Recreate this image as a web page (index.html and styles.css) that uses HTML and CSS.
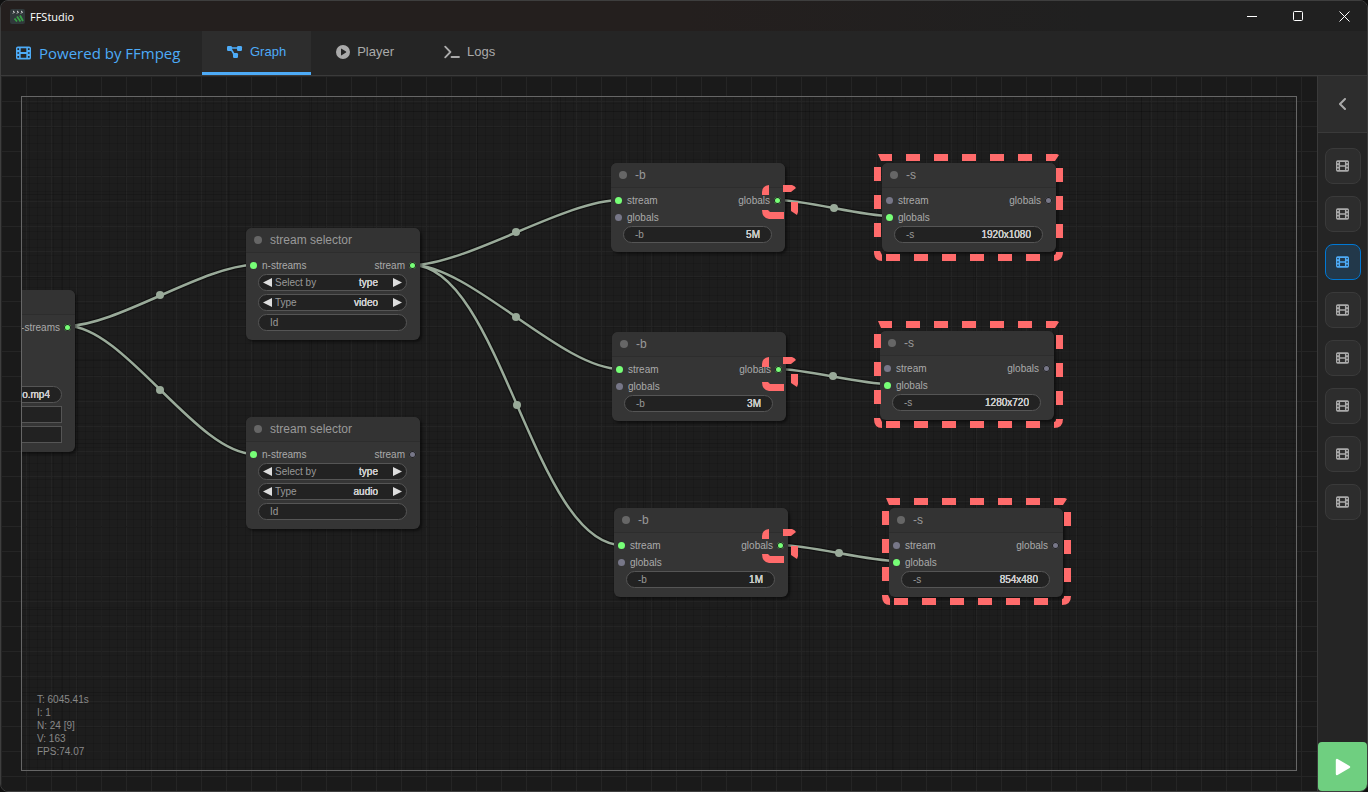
FILE: index.html
```html
<!DOCTYPE html>
<html lang="en">
<head>
<meta charset="utf-8">
<title>FFStudio</title>
<link rel="stylesheet" href="styles.css">
</head>
<body>
<svg class="defs" aria-hidden="true">
  <symbol id="film" viewBox="0 0 16 14">
    <path fill="currentColor" fill-rule="evenodd" d="M2 0h12a2 2 0 0 1 2 2v10a2 2 0 0 1-2 2H2a2 2 0 0 1-2-2V2a2 2 0 0 1 2-2zM5 2v4h6V2zM5 8v4h6V8zM1.5 2v1.7h1.8V2zM1.5 6.1v1.8h1.8V6.1zM1.5 10.2V12h1.8v-1.8zM12.7 2v1.7h1.8V2zM12.7 6.1v1.8h1.8V6.1zM12.7 10.2V12h1.8v-1.8z"/>
  </symbol>
  <symbol id="frame-large" viewBox="0 0 189 107">
    <path fill="#ff6b6b" d="M4 0H18V7H7ZM32 0h14v7h-14zM60 0h14v7h-14zM88 0h14v7h-14zM116 0h14v7h-14zM144 0h14v7h-14zM172 0H183L185 1 181 7H172ZM0 13h7v14H0zM0 41h7v14H0zM0 69h7v14H0zM182 14h7v14h-7zM182 42h7v14h-7zM182 70h7v14h-7zM0 97H6L8 101V107Q0 107 0 98ZM12 100h14v7h-14zM40 100h14v7h-14zM68 100h14v7h-14zM96 100h14v7h-14zM124 100h14v7h-14zM152 100h14v7h-14zM189 98Q189 107 180 107V101Q182 101 182 98Z"/>
  </symbol>
  <symbol id="frame-small" viewBox="0 0 36 34">
    <path fill="#ff6b6b" d="M0 10V7Q0 1 7 0V10ZM21 0H30Q33 1 34 3L29 7H21ZM29 17H36V27L35 30 29 26ZM0 25H6L8 27H22V34H7Q0 33 0 25Z"/>
  </symbol>
</svg>
<div class="window">
  <header class="titlebar">
    <svg class="app-icon" viewBox="0 0 15 15">
      <rect width="15" height="15" rx="2" fill="#30383a"/>
      <path d="M3 2l1.5 1L3 4.5M7 2l1.5 1L7 4.500M11 2l1.500 1L11 4.500" stroke="#e6e6e6" fill="none"/>
      <path d="M4.500 9.500l2.500 3M7 7.500l3.500 5M10 6.500l3 5.500" stroke="#37a046" stroke-width="1.8" fill="none"/>
    </svg>
    <span class="app-title">FFStudio</span>
    <div class="window-controls">
      <button aria-label="Minimize"><svg viewBox="0 0 11 11"><path d="M0 5.5h10"/></svg></button>
      <button aria-label="Maximize"><svg viewBox="0 0 11 11"><rect x=".5" y=".5" width="9" height="9" rx="1"/></svg></button>
      <button aria-label="Close"><svg viewBox="0 0 11 11"><path d="M.5 .5l10 10M10.5 .5l-10 10"/></svg></button>
    </div>
  </header>
  <nav class="navbar">
    <div class="brand"><svg class="brand-icon"><use href="#film"/></svg>Powered by FFmpeg</div>
    <button class="tab active">
      <svg width="16" height="14" viewBox="0 0 16 14"><path d="M3 3h9M4 4l4 7" stroke="currentColor" stroke-width="1.6"/><rect y="1" width="5" height="5" rx="1.2" fill="currentColor"/><rect x="10" y="1" width="5" height="5" rx="1.2" fill="currentColor"/><rect x="6" y="8" width="5" height="5" rx="1.2" fill="currentColor"/></svg>
      Graph</button>
    <button class="tab">
      <svg width="14" height="14" viewBox="0 0 14 14"><path fill="currentColor" fill-rule="evenodd" d="M7 0a7 7 0 1 1 0 14A7 7 0 0 1 7 0zM5 4v6q0 .6.6.3L10 7.5q.6-.5 0-1L5.6 3.7Q5 3.4 5 4z"/></svg>
      Player</button>
    <button class="tab">
      <svg width="16" height="14" viewBox="0 0 16 14"><path d="M1.2 1.7L6.4 7 1.2 12.3M7.5 12H15" fill="none" stroke="currentColor" stroke-width="1.8" stroke-linecap="round" stroke-linejoin="round"/></svg>
      Logs</button>
  </nav>
  <div class="workspace">
    <main class="graph-area">
      <div class="canvas">
        <svg class="links">
          <g transform="translate(-22 -97)">
            <g class="link-shadow">
              <path d="M67 326C116 326 205 265 254 265M67 326C124 326 197 454 254 454M412 265C466 265 566 200 620 200M412 265C470 265 562 369 620 369M412 265C500 265 534 545 622 545M777 200C806 200 861 216 890 216M778 369C806 369 860 384 888 384M780 545C810 545 867 561 897 561"/>
            </g>
            <g class="link-line">
              <path d="M67 326C116 326 205 265 254 265M67 326C124 326 197 454 254 454M412 265C466 265 566 200 620 200M412 265C470 265 562 369 620 369M412 265C500 265 534 545 622 545M777 200C806 200 861 216 890 216M778 369C806 369 860 384 888 384M780 545C810 545 867 561 897 561"/>
            </g>
            <g fill="#99aa99">
              <circle cx="160" cy="295" r="4"/><circle cx="160" cy="390" r="4"/><circle cx="516" cy="232" r="4"/><circle cx="516" cy="317" r="4"/><circle cx="517" cy="405" r="4"/><circle cx="834" cy="208" r="4"/><circle cx="833" cy="376" r="4"/><circle cx="839" cy="553" r="4"/>
            </g>
          </g>
        </svg>

        <section class="node source">
          <div class="node-title"></div>
          <div class="slots"><div class="slot"><span class="output on">-streams</span></div></div>
          <div class="widgets">
            <div class="widget"><input class="file" aria-label="File" value="o.mp4"></div>
            <button class="widget square" aria-label="Option"></button>
            <button class="widget square" aria-label="Option"></button>
          </div>
        </section>

        <section class="node selector-video">
          <div class="node-title">stream selector</div>
          <div class="slots"><div class="slot"><span class="input on">n-streams</span><span class="output on">stream</span></div></div>
          <div class="widgets">
            <div class="widget combo"><button class="prev" aria-label="Previous"></button><label for="v1">Select by</label><select id="v1"><option>type</option></select><button class="next" aria-label="Next"></button></div>
            <div class="widget combo"><button class="prev" aria-label="Previous"></button><label for="v2">Type</label><select id="v2"><option>video</option></select><button class="next" aria-label="Next"></button></div>
            <label class="widget">Id<input value=""></label>
          </div>
        </section>

        <section class="node selector-audio">
          <div class="node-title">stream selector</div>
          <div class="slots"><div class="slot"><span class="input on">n-streams</span><span class="output">stream</span></div></div>
          <div class="widgets">
            <div class="widget combo"><button class="prev" aria-label="Previous"></button><label for="a1">Select by</label><select id="a1"><option>type</option></select><button class="next" aria-label="Next"></button></div>
            <div class="widget combo"><button class="prev" aria-label="Previous"></button><label for="a2">Type</label><select id="a2"><option>audio</option></select><button class="next" aria-label="Next"></button></div>
            <label class="widget">Id<input value=""></label>
          </div>
        </section>

        <section class="node bitrate-5m">
          <div class="node-title">-b</div>
          <div class="slots"><div class="slot"><span class="input on">stream</span><span class="output on">globals</span></div><div class="slot"><span class="input">globals</span></div></div>
          <div class="widgets"><label class="widget">-b<input value="5M"></label></div>
        </section>
        <section class="node bitrate-3m">
          <div class="node-title">-b</div>
          <div class="slots"><div class="slot"><span class="input on">stream</span><span class="output on">globals</span></div><div class="slot"><span class="input">globals</span></div></div>
          <div class="widgets"><label class="widget">-b<input value="3M"></label></div>
        </section>
        <section class="node bitrate-1m">
          <div class="node-title">-b</div>
          <div class="slots"><div class="slot"><span class="input on">stream</span><span class="output on">globals</span></div><div class="slot"><span class="input">globals</span></div></div>
          <div class="widgets"><label class="widget">-b<input value="1M"></label></div>
        </section>

        <section class="node size-1080">
          <div class="node-title">-s</div>
          <div class="slots"><div class="slot"><span class="input">stream</span><span class="output">globals</span></div><div class="slot"><span class="input on">globals</span></div></div>
          <div class="widgets"><label class="widget">-s<input value="1920x1080"></label></div>
        </section>
        <section class="node size-720">
          <div class="node-title">-s</div>
          <div class="slots"><div class="slot"><span class="input">stream</span><span class="output">globals</span></div><div class="slot"><span class="input on">globals</span></div></div>
          <div class="widgets"><label class="widget">-s<input value="1280x720"></label></div>
        </section>
        <section class="node size-480">
          <div class="node-title">-s</div>
          <div class="slots"><div class="slot"><span class="input">stream</span><span class="output">globals</span></div><div class="slot"><span class="input on">globals</span></div></div>
          <div class="widgets"><label class="widget">-s<input value="854x480"></label></div>
        </section>

        <svg class="frame large at-1080"><use href="#frame-large"/></svg>
        <svg class="frame large at-720"><use href="#frame-large"/></svg>
        <svg class="frame large at-480"><use href="#frame-large"/></svg>
        <svg class="frame small at-5m"><use href="#frame-small"/></svg>
        <svg class="frame small at-3m"><use href="#frame-small"/></svg>
        <svg class="frame small at-1m"><use href="#frame-small"/></svg>

        <div class="stats">
          <div>T: 6045.41s</div>
          <div>I: 1</div>
          <div>N: 24 [9]</div>
          <div>V: 163</div>
          <div>FPS:74.07</div>
        </div>
      </div>
    </main>
    <aside class="sidebar">
      <button class="collapse" aria-label="Expand panel"><svg width="8" height="12" viewBox="0 0 8 12"><path d="M6 1L1 6l5 5" fill="none" stroke="currentColor" stroke-width="2" stroke-linecap="round"/></svg></button>
      <div class="presets">
        <button class="preset" aria-label="Preset 1"><svg><use href="#film"/></svg></button>
        <button class="preset" aria-label="Preset 2"><svg><use href="#film"/></svg></button>
        <button class="preset selected" aria-label="Preset 3"><svg><use href="#film"/></svg></button>
        <button class="preset" aria-label="Preset 4"><svg><use href="#film"/></svg></button>
        <button class="preset" aria-label="Preset 5"><svg><use href="#film"/></svg></button>
        <button class="preset" aria-label="Preset 6"><svg><use href="#film"/></svg></button>
        <button class="preset" aria-label="Preset 7"><svg><use href="#film"/></svg></button>
        <button class="preset" aria-label="Preset 8"><svg><use href="#film"/></svg></button>
      </div>
      <button class="run" aria-label="Run"><svg width="16" height="18" viewBox="0 0 16 18"><path d="M2 2v14L14 9z" fill="#fff" stroke="#fff" stroke-width="2.4" stroke-linejoin="round"/></svg></button>
    </aside>
  </div>
</div>
</body>
</html>
```

FILE: styles.css
```css
* { box-sizing: border-box; }
html, body { height: 100%; }
body {
  margin: 0;
  background: #101010;
  color: #aaa;
  font-family: "Liberation Sans", Arial, sans-serif;
  font-size: 13px;
  overflow: hidden;
}
button, input, select { font: inherit; color: inherit; border: 0; padding: 0; background: none; }
button { display: flex; align-items: center; justify-content: center; }
svg { display: block; flex: none; }
.defs { position: absolute; width: 0; height: 0; }

.window {
  display: flex;
  flex-direction: column;
  height: 100%;
  border: 1px solid #3e3e3e;
  border-radius: 8px;
  overflow: hidden;
  background: #1a1a1a;
}

.titlebar {
  display: flex;
  align-items: center;
  height: 30px;
  padding-left: 9px;
  background: linear-gradient(90deg, #241f1e 50%, #202020 80%);
  color: #fff;
}
.app-icon { width: 15px; height: 15px; margin-right: 5px; }
.app-title { font: 11px "Open Sans", sans-serif; }
.window-controls { display: flex; margin-left: auto; }
.window-controls button { width: 46px; height: 28px; }
.window-controls svg { width: 11px; height: 11px; fill: none; stroke: #fff; }

.navbar {
  display: flex;
  height: 45px;
  background: #252525;
  border-bottom: 1px solid #3a3a3a;
}
.brand {
  display: flex;
  align-items: center;
  gap: 8px;
  width: 201px;
  padding-left: 15px;
  color: #4dabf7;
  font: 500 15px "Open Sans", sans-serif;
}
.brand-icon { width: 15px; height: 14px; }
.tab { gap: 7px; padding: 0 25px; border-bottom: 3px solid transparent; }
.tab.active { background: #2d2d2d; color: #4dabf7; border-color: #4dabf7; }

.workspace { display: flex; flex: 1; min-height: 0; }
.graph-area {
  display: flex;
  flex: 1;
  min-width: 0;
  padding: 20px;
  background:
    linear-gradient(90deg, #252525 1px, transparent 1px) 0 0 / 25px 25px,
    linear-gradient(#252525 1px, transparent 1px) 0 0 / 25px 25px,
    #1a1a1a;
}
.canvas {
  position: relative;
  flex: 1;
  overflow: hidden;
  border: 1px solid #666;
  background:
    linear-gradient(90deg, rgba(0, 0, 0, .16) 1px, transparent 1px) 40px 0 / 83px 83px,
    linear-gradient(rgba(0, 0, 0, .16) 1px, transparent 1px) 0 14px / 83px 83px,
    linear-gradient(90deg, rgba(0, 0, 0, .1) 1px, transparent 1px) 7px 0 / 8px 8px,
    linear-gradient(rgba(0, 0, 0, .1) 1px, transparent 1px) 0 6px / 8px 8px,
    rgba(34, 34, 34, .4);
  font-size: 10px;
}
.links { position: absolute; inset: 0; width: 100%; height: 100%; }
.links path { fill: none; }
.link-shadow { stroke: rgba(0, 0, 0, .4); stroke-width: 5; }
.link-line { stroke: #99aa99; stroke-width: 2.5; }

.node {
  position: absolute;
  width: 174px;
  border-radius: 6px;
  background: #353535;
  box-shadow: 2px 2px 3px rgba(0, 0, 0, .5);
}
.source { left: -121px; top: 193px; }
.selector-video { left: 224px; top: 131px; }
.selector-audio { left: 224px; top: 320px; }
.bitrate-5m { left: 589px; top: 66px; }
.bitrate-3m { left: 590px; top: 235px; }
.bitrate-1m { left: 592px; top: 411px; }
.size-1080 { left: 860px; top: 66px; }
.size-720 { left: 858px; top: 234px; }
.size-480 { left: 867px; top: 411px; }

.node-title {
  display: flex;
  align-items: center;
  gap: 8px;
  height: 25px;
  padding-left: 8px;
  border-bottom: 1px solid #2d2d2d;
  border-radius: 6px 6px 0 0;
  background: #333;
  color: #999;
  font-size: 12px;
}
.node-title::before { content: ""; width: 8px; height: 8px; border-radius: 50%; background: #666; }
.slots { padding-top: 4px; }
.source .slots { min-height: 71px; }
.slot { display: flex; height: 17px; padding: 0 4px; }
.input, .output { display: flex; align-items: center; gap: 5px; }
.output { margin-left: auto; flex-direction: row-reverse; gap: 4px; }
.input::before, .output::before {
  content: "";
  width: 7px;
  height: 7px;
  border-radius: 50%;
  background: #778;
}
.output::before { box-shadow: inset 0 0 0 1px #222; }
.input.on::before, .output.on::before { background: #7f7; }

.widgets { display: flex; flex-direction: column; gap: 3px; padding: 0 13px 9px 12px; }
.widget {
  display: flex;
  align-items: center;
  height: 17px;
  padding: 0 11px;
  border: 1px solid #555;
  border-radius: 9px;
  background: #222;
  color: #999;
}
.widget input { flex: 1; min-width: 0; text-align: right; }
.widget input, .widget select { height: 15px; color: #ccc; text-shadow: 0 0 0 #ccc, 0 0 0 #ccc; }
.widget .file { flex: none; width: 28px; margin-left: auto; }
.widget.square { border-radius: 0; }
.combo { padding: 0 4px; gap: 3px; }
.combo select { flex: 1; min-width: 0; appearance: none; text-align: right; text-align-last: right; margin-right: 12px; }
.prev, .next { width: 9px; height: 9px; background: #ddd; }
.prev { clip-path: polygon(0 50%, 100% 0, 100% 100%); }
.next { clip-path: polygon(0 0, 100% 50%, 0 100%); }

.frame { position: absolute; }
.frame.large { width: 189px; height: 107px; }
.frame.small { width: 36px; height: 34px; }
.at-1080 { left: 852px; top: 57px; }
.at-720 { left: 852px; top: 224px; }
.at-480 { left: 860px; top: 401px; }
.at-5m { left: 740px; top: 88px; }
.at-3m { left: 740px; top: 260px; }
.at-1m { left: 740px; top: 432px; }

.stats { position: absolute; left: 15px; bottom: 12px; line-height: 13px; color: #888; }

.sidebar {
  display: flex;
  flex-direction: column;
  width: 50px;
  border-left: 1px solid #3a3a3a;
  background: #252525;
}
.collapse { height: 57px; background: #2d2d2d; border-bottom: 1px solid #3a3a3a; }
.presets { display: flex; flex-direction: column; align-items: center; gap: 12px; padding-top: 15px; }
.preset { width: 36px; height: 36px; border: 1px solid #3a3a3a; border-radius: 8px; background: #2d2d2d; }
.preset svg { width: 13px; height: 12px; }
.preset.selected { border-color: #0078d4; background: #22384a; color: #4dabf7; }
.run { height: 49px; margin-top: auto; border-radius: 4px; background: #6fcf80; }
```
